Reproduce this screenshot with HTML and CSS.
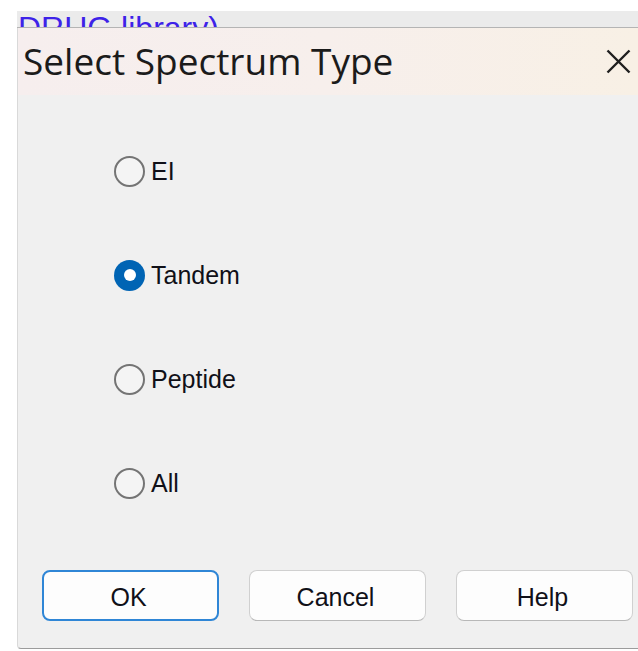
FILE: index.html
```html
<!DOCTYPE html>
<html lang="en">
<head>
<meta charset="utf-8">
<title>Select Spectrum Type</title>
<link rel="stylesheet" href="styles.css">
</head>
<body>
<div class="screen">
  <div class="parent-strip">
    <span class="parent-link">DRUG library)</span>
  </div>
  <div class="dialog">
    <div class="titlebar">
      <span class="title">Select Spectrum Type</span>
      <button class="close" aria-label="Close">
        <svg width="25" height="25" viewBox="0 0 25 25">
          <path d="M1.5 1.5 L23.5 23.5 M23.5 1.5 L1.5 23.5" stroke="#1f1f1f" stroke-width="2.4" fill="none"/>
        </svg>
      </button>
    </div>
    <div class="content">
      <div class="options">
        <label class="option"><span class="radio"></span><span class="label">EI</span></label>
        <label class="option"><span class="radio checked"></span><span class="label">Tandem</span></label>
        <label class="option"><span class="radio"></span><span class="label">Peptide</span></label>
        <label class="option"><span class="radio"></span><span class="label">All</span></label>
      </div>
      <div class="buttons">
        <button class="btn default">OK</button>
        <button class="btn">Cancel</button>
        <button class="btn">Help</button>
      </div>
    </div>
  </div>
</div>
</body>
</html>
```

FILE: styles.css
```css
html, body {
  margin: 0;
  padding: 0;
  background: #ffffff;
  overflow: hidden;
}

.screen {
  width: 638px;
  height: 651px;
  padding: 11px 0 0 17px;
  box-sizing: border-box;
}

/* strip of the window underneath the dialog */
.parent-strip {
  height: 15px;
  padding-top: 1px;
  background: #ebebeb;
  border-bottom: 1px solid #b4b4b4;
  overflow: hidden;
  box-sizing: content-box;
}

.parent-link {
  display: block;
  margin-left: 1px;
  font-family: "Liberation Sans", Arial, sans-serif;
  font-size: 32px;
  line-height: 32px;
  color: #3d22e8;
  white-space: nowrap;
}

.dialog {
  width: 621px;
  height: 621px;
  border-left: 1px solid #d9d9d9;
  border-bottom: 1px solid #9c9c9c;
  border-bottom-left-radius: 4px;
  box-sizing: border-box;
  background: #f0f0f0;
  display: flex;
  flex-direction: column;
}

.titlebar {
  height: 67px;
  flex: none;
  display: flex;
  align-items: center;
  justify-content: space-between;
  padding: 0 7px 0 5px;
  background: linear-gradient(to right, #f6eeee, #f7efec 50%, #f8f0e5);
}

.title {
  font-family: "Open Sans", "Noto Sans", sans-serif;
  font-size: 37px;
  line-height: 44px;
  color: #1b1b1b;
  padding-bottom: 2px;
}

.close {
  border: 0;
  padding: 0;
  background: transparent;
  width: 25px;
  height: 25px;
  display: flex;
  margin-bottom: 1px;
}

.content {
  flex: 1;
  display: flex;
  flex-direction: column;
  padding: 24px 0 0 25px;
}

.options {
  display: flex;
  flex-direction: column;
  padding-left: 71px;
}

.option {
  height: 104px;
  display: flex;
  align-items: center;
  font-family: "Liberation Sans", Arial, sans-serif;
  font-size: 25px;
  color: #101018;
}

.radio {
  width: 31px;
  height: 31px;
  box-sizing: border-box;
  border-radius: 50%;
  border: 2.5px solid #747474;
  background: #f4f4f4;
  flex: none;
  display: flex;
  align-items: center;
  justify-content: center;
}

.radio.checked {
  border: 0;
  background: #0064b4;
}

.radio.checked::after {
  content: "";
  width: 12px;
  height: 12px;
  border-radius: 50%;
  background: #ffffff;
}

.label {
  margin-left: 6px;
}

.buttons {
  display: flex;
  gap: 30px;
  margin-top: 35px;
  margin-left: -1px;
}

.btn {
  width: 177px;
  height: 51px;
  box-sizing: border-box;
  border: 1px solid #d0d0d0;
  border-bottom-color: #b8b8b8;
  border-radius: 8px;
  background: #fdfdfd;
  font-family: "Liberation Sans", Arial, sans-serif;
  font-size: 25px;
  color: #101018;
  padding: 3px 4px 0 0;
}

.btn.default {
  border: 2px solid #2f86d6;
}
```
